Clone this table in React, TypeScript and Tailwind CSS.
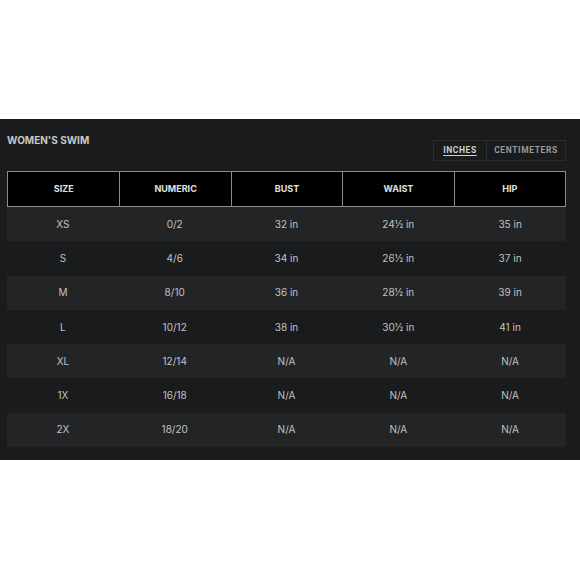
const rows = [
  ["XS", "0/2", "32 in", "24½ in", "35 in"],
  ["S", "4/6", "34 in", "26½ in", "37 in"],
  ["M", "8/10", "36 in", "28½ in", "39 in"],
  ["L", "10/12", "38 in", "30½ in", "41 in"],
  ["XL", "12/14", "N/A", "N/A", "N/A"],
  ["1X", "16/18", "N/A", "N/A", "N/A"],
  ["2X", "18/20", "N/A", "N/A", "N/A"],
];

const heads = ["SIZE", "NUMERIC", "BUST", "WAIST", "HIP"];

export default function App() {
  return (
    <div className="h-[580px] w-[580px] bg-white pt-[119px] font-['Inter','Roboto',sans-serif]">
      <div className="h-[341px] bg-[#1a1b1d] pl-[7px] pr-[14px] pt-[14px]">
        <div className="flex items-start justify-between">
          <h2 className="text-[10px] font-bold leading-[14px] text-[#c9c9c9]">WOMEN'S SWIM</h2>
          <div className="mt-[7px] flex h-[21px] font-['Roboto',sans-serif] text-[8.5px] font-bold tracking-[0.6px]">
            <button className="flex w-[54px] items-center justify-center border border-[#2a2b2e] text-[#d0d0d0] underline underline-offset-2">
              INCHES
            </button>
            <button className="flex w-[79px] items-center justify-center border border-l-0 border-[#2a2b2e] text-[#9a9a9a]">
              CENTIMETERS
            </button>
          </div>
        </div>
        <div className="mt-[10px]">
          <div className="grid h-[36px] grid-cols-5 border border-[#8c8c8c] bg-black">
            {heads.map((h, i) => (
              <div
                key={h}
                className={`flex items-center justify-center text-[9px] font-bold text-[#e0e0e0] ${i > 0 ? "border-l border-[#8c8c8c]" : ""}`}
              >
                {h}
              </div>
            ))}
          </div>
          {rows.map((r, ri) => (
            <div key={r[0]} className={`grid h-[34.3px] grid-cols-5 ${ri % 2 === 0 ? "bg-[#222426]" : ""}`}>
              {r.map((c, ci) => (
                <div key={ci} className="flex items-center justify-center text-[10px] text-[#c2c2c2]">
                  {c}
                </div>
              ))}
            </div>
          ))}
        </div>
      </div>
    </div>
  );
}
